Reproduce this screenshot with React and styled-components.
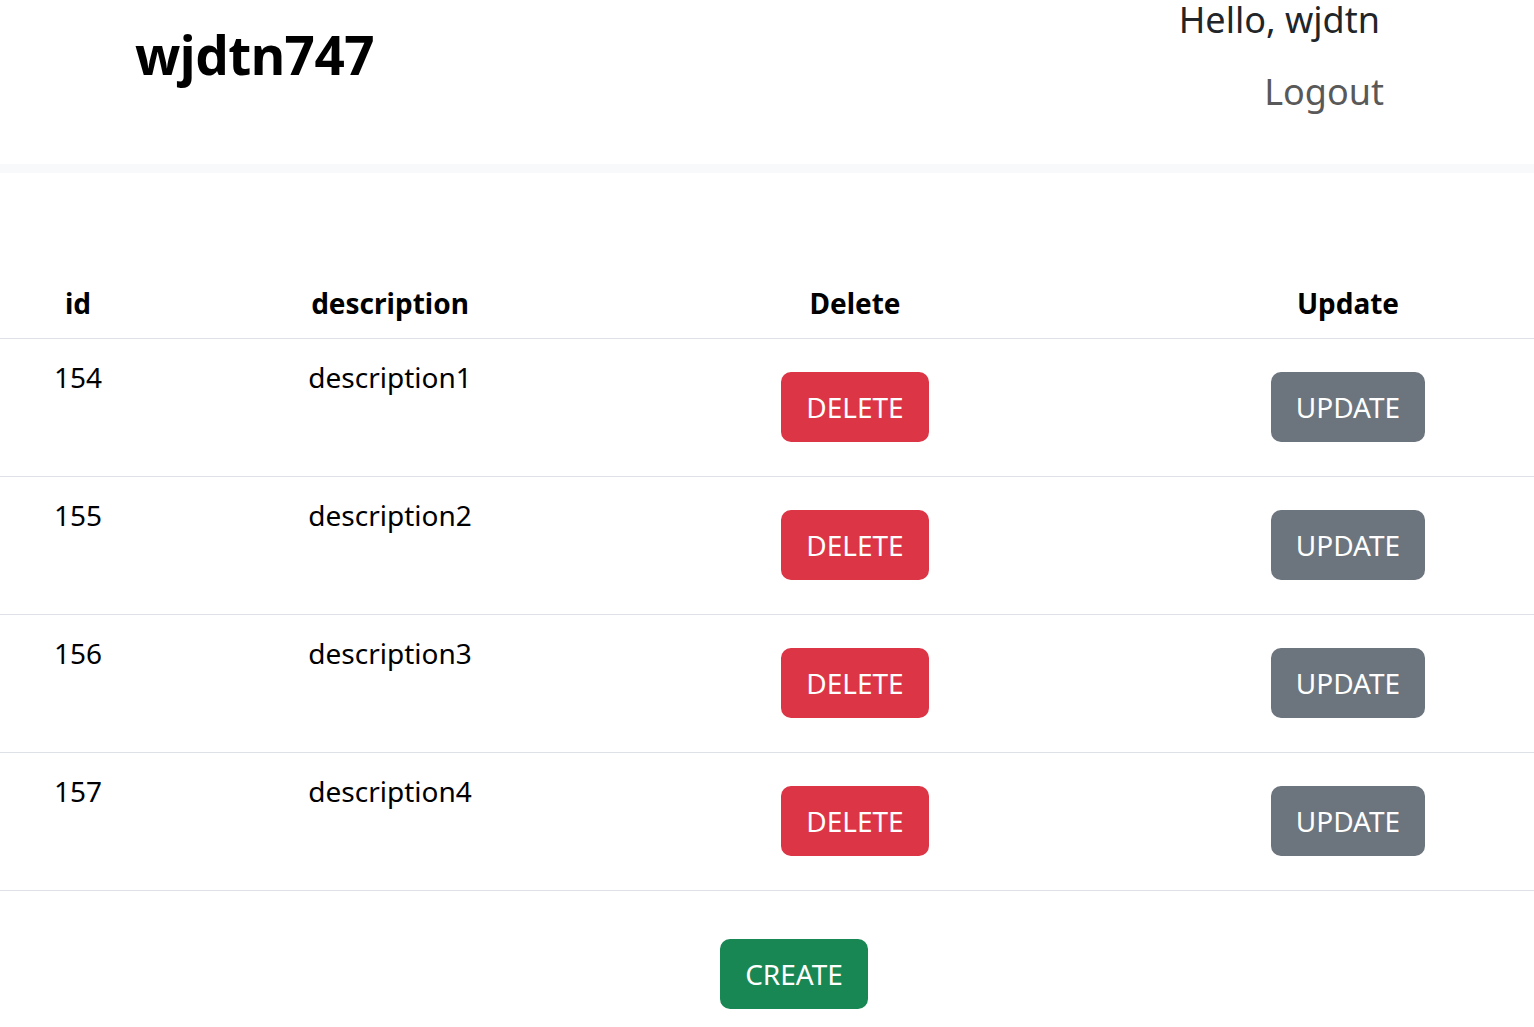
import React from 'react';
import styled, { createGlobalStyle } from 'styled-components';

const GlobalStyle = createGlobalStyle`
  html, body {
    margin: 0;
    padding: 0;
    background: #fff;
    overflow-x: hidden;
  }
  body {
    font-family: "Noto Sans", "Open Sans", sans-serif;
    color: #000;
  }
`;

const Header = styled.header`
  height: 164px;
  border-bottom: 9px solid #f8f9fa;
  display: flex;
  justify-content: space-between;
  align-items: flex-start;
  padding: 0 150px 0 135px;
  overflow: hidden;
`;

const Title = styled.h1`
  margin: 23px 0 0;
  font-size: 53px;
  font-weight: 700;
  line-height: 1.2;
  letter-spacing: -0.5px;
`;

const UserBox = styled.div`
  display: flex;
  flex-direction: column;
  align-items: flex-end;
  margin-top: -7px;
`;

const Greeting = styled.span`
  font-size: 36px;
  line-height: 1.5;
  color: #212529;
  margin-right: 4px;
`;

const LogoutLink = styled.a`
  font-size: 36px;
  line-height: 1.5;
  color: #595959;
  margin-top: 18px;
  text-decoration: none;
  cursor: pointer;
`;

const Main = styled.main`
  width: 1588px;
  padding-top: 95px;
`;

const Row = styled.div`
  display: grid;
  grid-template-columns: 156px 468px 462px 524px;
  border-bottom: 1px solid #dee2e6;
`;

const HeadCell = styled.div`
  padding: 14px;
  text-align: center;
  font-size: 28px;
  font-weight: 700;
  line-height: 42px;
`;

const Cell = styled.div`
  padding: 17px 14px 14px;
  text-align: center;
  font-size: 28px;
  line-height: 42px;
  color: #000;
`;

const colors = {
  danger: '#dc3545',
  secondary: '#6c757d',
  success: '#198754',
};

const Button = styled.button`
  display: inline-block;
  background: ${(p) => colors[p.$variant]};
  border: 2px solid ${(p) => colors[p.$variant]};
  color: #fff;
  font-family: "Noto Sans", "Open Sans", sans-serif;
  font-size: 28px;
  line-height: 42px;
  padding: 12px 23px;
  border-radius: 10px;
  margin: ${(p) => (p.$inRow ? '16px 0 20px' : '0')};
  cursor: pointer;
`;

const Footer = styled.div`
  display: flex;
  justify-content: center;
  padding-top: 48px;
`;

const todos = [
  { id: 154, description: 'description1' },
  { id: 155, description: 'description2' },
  { id: 156, description: 'description3' },
  { id: 157, description: 'description4' },
];

export default function App() {
  return (
    <>
      <GlobalStyle />
      <Header>
        <Title>wjdtn747</Title>
        <UserBox>
          <Greeting>Hello, wjdtn</Greeting>
          <LogoutLink>Logout</LogoutLink>
        </UserBox>
      </Header>
      <Main>
        <Row>
          <HeadCell>id</HeadCell>
          <HeadCell>description</HeadCell>
          <HeadCell>Delete</HeadCell>
          <HeadCell>Update</HeadCell>
        </Row>
        {todos.map((t) => (
          <Row key={t.id}>
            <Cell>{t.id}</Cell>
            <Cell>{t.description}</Cell>
            <Cell>
              <Button $variant="danger" $inRow>DELETE</Button>
            </Cell>
            <Cell>
              <Button $variant="secondary" $inRow>UPDATE</Button>
            </Cell>
          </Row>
        ))}
        <Footer>
          <Button $variant="success">CREATE</Button>
        </Footer>
      </Main>
    </>
  );
}
